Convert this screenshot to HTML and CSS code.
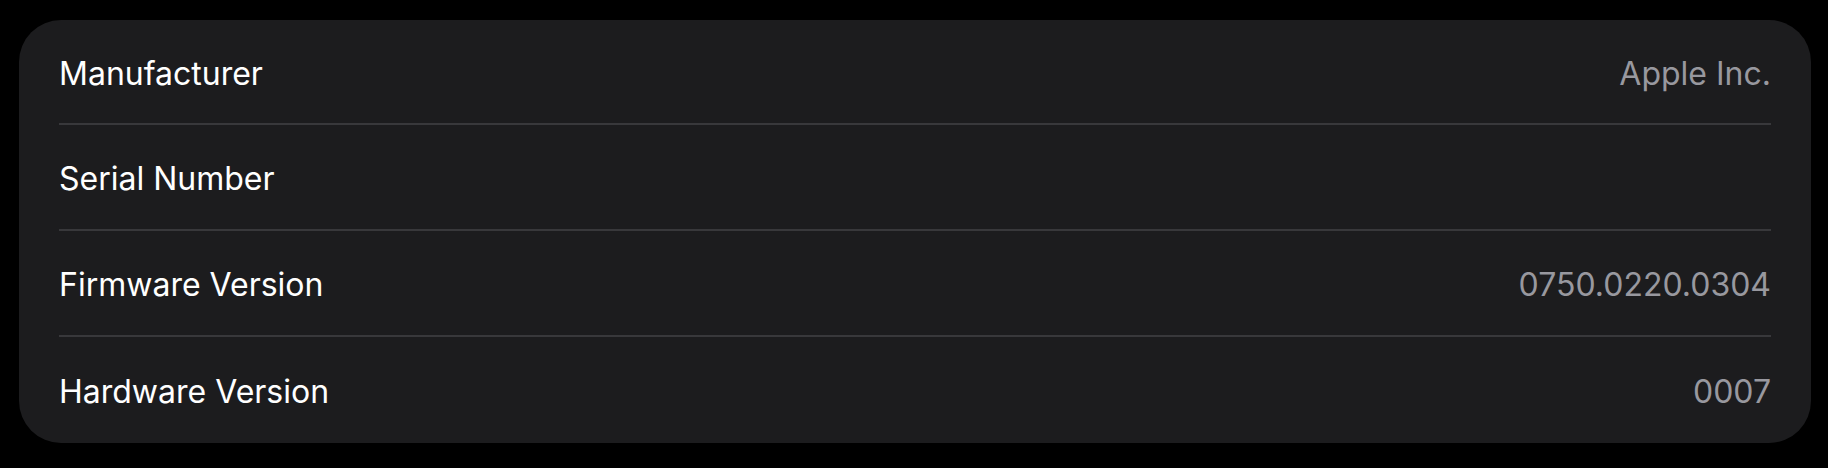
FILE: index.html
```html
<!DOCTYPE html>
<html>
<head>
<meta charset="utf-8">
<link rel="stylesheet" href="styles.css">
</head>
<body>
<div class="card">
  <div class="row"><span class="label">Manufacturer</span><span class="value">Apple Inc.</span></div>
  <div class="row"><span class="label">Serial Number</span><span class="value"></span></div>
  <div class="row"><span class="label">Firmware Version</span><span class="value">0750.0220.0304</span></div>
  <div class="row"><span class="label">Hardware Version</span><span class="value">0007</span></div>
</div>
</body>
</html>
```
FILE: styles.css
```css
html, body {
  margin: 0;
  padding: 0;
  background: #000;
}
body {
  padding: 20px 17px 0 19px;
  font-family: Inter, "Liberation Sans", sans-serif;
}
.card {
  width: 1792px;
  background: #1c1c1e;
  border-radius: 42px;
  padding: 0 40px;
  box-sizing: border-box;
}
.row {
  height: 106px;
  display: flex;
  align-items: center;
  justify-content: space-between;
  border-bottom: 2px solid #38383b;
  box-sizing: border-box;
  padding-top: 3px;
  font-size: 32px;
  letter-spacing: 0;
}
.row:first-child {
  height: 105px;
}
.row:last-child {
  border-bottom: none;
  height: 106px;
}
.label {
  color: #ffffff;
}
.value {
  color: #98989f;
}
```
